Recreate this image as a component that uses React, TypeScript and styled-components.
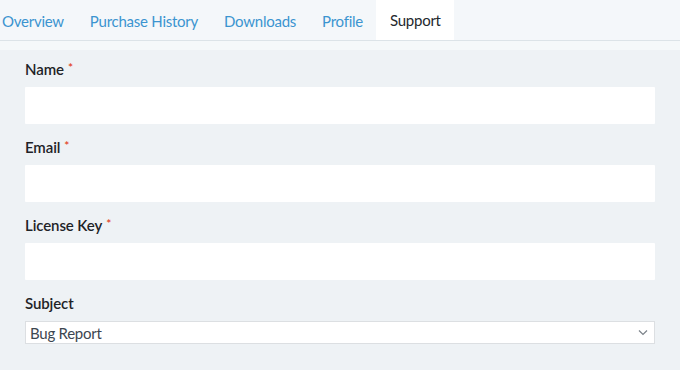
import React from "react";
import styled, { createGlobalStyle } from "styled-components";

const Global = createGlobalStyle`
  html, body { margin: 0; padding: 0; background: #f5f8fa; }
  body { font-family: Lato, "Open Sans", sans-serif; }
  * { box-sizing: border-box; }
`;

const Page = styled.div`
  width: 680px;
  height: 370px;
  overflow: hidden;
  background: #f5f8fa;
`;

const TabBar = styled.nav`
  display: flex;
  height: 41px;
  background: #f4f7fa;
  border-bottom: 1px solid #dce3e8;
  overflow: hidden;
`;

const TabList = styled.div`
  display: flex;
  margin-left: -11px;
`;

const Tab = styled.div<{ $active?: boolean }>`
  height: 40px;
  padding: 0 13px 0 ${(p) => (p.$active ? 14 : 13)}px;
  padding-top: ${(p) => (p.$active ? 0 : 2)}px;
  display: flex;
  align-items: center;
  font-size: 15px;
  line-height: 20px;
  letter-spacing: -0.25px;
  color: ${(p) => (p.$active ? "#23282d" : "#3b94d0")};
  background: ${(p) => (p.$active ? "#ffffff" : "transparent")};
`;

const Spacer = styled.div`
  height: 9px;
`;

const Panel = styled.form`
  background: #eef2f5;
  padding: 9px 25px 30px 25px;
  display: flex;
  flex-direction: column;
  gap: 13px;
`;

const Field = styled.div`
  display: flex;
  flex-direction: column;
  gap: 8px;
`;

const Label = styled.label`
  display: block;
  height: 20px;
  font-size: 15px;
  line-height: 20px;
  font-weight: 600;
  letter-spacing: -0.1px;
  color: #1e2327;
`;

const Req = styled.span`
  display: inline-block;
  color: #e2401c;
  font-size: 12px;
  line-height: 12px;
  margin-left: 4px;
  vertical-align: top;
  position: relative;
  top: 3px;
`;

const Input = styled.div`
  height: 37px;
  width: 630px;
  background: #ffffff;
  border-radius: 1px;
`;

const Select = styled.div`
  height: 23px;
  width: 630px;
  background: #ffffff;
  border: 1px solid #dcdfe2;
  display: flex;
  align-items: center;
  justify-content: space-between;
  padding: 0 6px 0 4px;
  font-size: 15px;
  letter-spacing: -0.25px;
  color: #3c4650;
  font-weight: 400;
`;

const Chevron = () => (
  <svg width="10" height="7" viewBox="0 0 10 7" fill="none">
    <path d="M1 1.5 L5 5.5 L9 1.5" stroke="#7b8289" strokeWidth="1.2" />
  </svg>
);

export default function App() {
  const tabs = ["Overview", "Purchase History", "Downloads", "Profile", "Support"];
  return (
    <Page>
      <Global />
      <TabBar>
        <TabList>
          {tabs.map((t) => (
            <Tab key={t} $active={t === "Support"}>
              {t}
            </Tab>
          ))}
        </TabList>
      </TabBar>
      <Spacer />
      <Panel>
        <Field>
          <Label>
            Name<Req>*</Req>
          </Label>
          <Input />
        </Field>
        <Field>
          <Label>
            Email<Req>*</Req>
          </Label>
          <Input />
        </Field>
        <Field>
          <Label>
            License Key<Req>*</Req>
          </Label>
          <Input />
        </Field>
        <Field>
          <Label>Subject</Label>
          <Select>
            <span>Bug Report</span>
            <Chevron />
          </Select>
        </Field>
      </Panel>
    </Page>
  );
}
